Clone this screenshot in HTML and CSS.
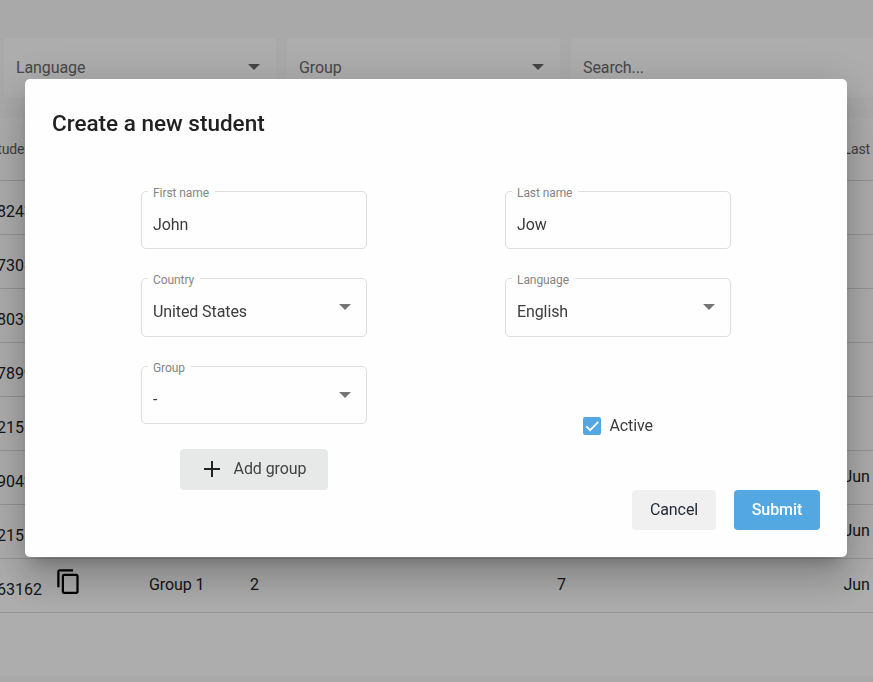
FILE: index.html
```html
<!DOCTYPE html>
<html lang="en">
<head>
<meta charset="utf-8">
<title>Students</title>
<link rel="stylesheet" href="styles.css">
</head>
<body>
<main class="page">
  <div class="filters">
    <div class="filter"><span>Language</span><i class="caret"></i></div>
    <div class="filter"><span>Group</span><i class="caret"></i></div>
    <div class="filter"><span>Search...</span></div>
  </div>
  <section class="table">
    <div class="row head"><span class="id">Student</span><span></span><span></span><span></span><span></span><span>Last</span></div>
    <div class="row"><span class="id">8243</span></div>
    <div class="row"><span class="id">7308</span></div>
    <div class="row"><span class="id">8039</span></div>
    <div class="row"><span class="id">7899</span></div>
    <div class="row"><span class="id">215</span></div>
    <div class="row"><span class="id">9042</span><span></span><span></span><span></span><span></span><span>Jun</span></div>
    <div class="row"><span class="id">215</span><span></span><span></span><span></span><span></span><span>Jun</span></div>
    <div class="row">
      <span class="id">63162</span>
      <span class="copy"><svg width="27" height="27" viewBox="0 0 24 24"><path d="M16 1H4c-1.100 0-2 .9-2 2v14h2V3h12V1zm3 4H8c-1.100 0-2 .9-2 2v14c0 1.100.9 2 2 2h11c1.100 0 2-.9 2-2V7c0-1.100-.9-2-2-2zm0 16H8V7h11v14z"/></svg></span>
      <span>Group 1</span><span>2</span><span>7</span><span>Jun</span>
    </div>
  </section>
</main>
<div class="backdrop">
  <form class="dialog">
    <h2>Create a new student</h2>
    <div class="fields">
      <div class="column">
        <div class="field"><label>First name</label><span>John</span></div>
        <div class="field tall"><label>Country</label><span>United States</span><i class="caret"></i></div>
        <div class="field"><label>Group</label><span>-</span><i class="caret"></i></div>
        <button type="button" class="add"><svg width="16" height="16" viewBox="0 0 16 16"><path d="M8 0v16M0 8h16"/></svg>Add group</button>
      </div>
      <div class="column">
        <div class="field"><label>Last name</label><span>Jow</span></div>
        <div class="field tall"><label>Language</label><span>English</span><i class="caret"></i></div>
        <div class="check"><span class="box"><svg width="18" height="18" viewBox="0 0 18 18"><path d="M3.300 9.300l3.800 3.900L15.300 4.900"/></svg></span>Active</div>
      </div>
    </div>
    <div class="actions">
      <button type="button" class="cancel">Cancel</button>
      <button type="button" class="submit">Submit</button>
    </div>
  </form>
</div>
</body>
</html>
```
FILE: styles.css
```css
* { box-sizing: border-box; }
body {
  margin: 0;
  height: 682px;
  overflow: hidden;
  background: #fafafa;
  font: 16px/20px Roboto, sans-serif;
  letter-spacing: -.1px;
  color: #212121;
}
.page { padding-top: 38px; }
.filters {
  display: grid;
  grid-template-columns: 272px 273px 320px;
  gap: 11px;
  padding-left: 4px;
}
.filter {
  height: 59px;
  padding: 0 16px 0 12px;
  display: flex;
  align-items: center;
  justify-content: space-between;
  background: #fff;
  border-radius: 4px;
  color: #6b6b6b;
}
.caret {
  width: 0;
  border: 6px solid transparent;
  border-top-color: #757575;
  border-bottom: 0;
}
.filter .caret { margin-top: -1px; border-top-color: #666; }
.table {
  margin-top: 21px;
  height: 558px;
  background: #fff;
}
.row {
  display: grid;
  grid-template-columns: 54px 95px 101px 307px 286.5px 60px;
  height: 54px;
  align-items: center;
  padding-bottom: 1px;
  border-bottom: 1px solid #dcdcdc;
}
.head {
  height: 63px;
  padding-bottom: 0;
  font-size: 14px;
  font-weight: 400;
  color: #606060;
}
.id { margin-left: -3px; padding-top: 9px; letter-spacing: 0; }
.head .id { margin-left: -11px; padding-top: 0; letter-spacing: -.1px; }
.copy { height: 28px; margin: -7px 0 0 1px; }
.backdrop {
  position: fixed;
  inset: 0;
  padding: 79px 26px 0 25px;
  background: rgba(0, 0, 0, .32);
}
.dialog {
  height: 478px;
  padding: 28px 27px 27px;
  display: flex;
  flex-direction: column;
  background: #fefefe;
  border-radius: 5px;
  box-shadow: 0 11px 15px -7px rgba(0, 0, 0, .2), 0 24px 38px 3px rgba(0, 0, 0, .14), 0 9px 46px 8px rgba(0, 0, 0, .12);
}
h2 { margin: 0; font-size: 22.5px; line-height: 32px; font-weight: 500; letter-spacing: 0; }
.fields {
  display: flex;
  gap: 138px;
  margin: 52px 0 0 89px;
}
.column {
  width: 226px;
  display: flex;
  flex-direction: column;
  gap: 29px;
}
.field {
  position: relative;
  height: 58px;
  display: flex;
  align-items: center;
  justify-content: space-between;
  padding: 10px 15px 0 11px;
  border: 1px solid #dedede;
  border-radius: 5px;
  color: #3c3c3c;
}
.tall { height: 59px; padding-top: 8px; }
.field label {
  position: absolute;
  left: 6px;
  top: -9px;
  padding: 0 6px 0 5px;
  font-size: 12px;
  line-height: 20px;
  letter-spacing: -.08px;
  background: #fefefe;
  color: #858585;
}
.field .caret { margin-top: -10px; }
.tall .caret { margin-top: -9px; }
button {
  height: 40px;
  padding: 0;
  border: 0;
  border-radius: 4px;
  font: 16px/20px Roboto, sans-serif;
  letter-spacing: -.08px;
}
.add {
  width: 148px;
  height: 41px;
  margin: -4px 0 0 39px;
  padding: 0 0 2px 2px;
  display: flex;
  align-items: center;
  justify-content: center;
  gap: 14px;
  background: #e7e9e8;
  color: #424242;
}
.add svg { fill: none; stroke: #222; stroke-width: 2; }
.check {
  display: flex;
  align-items: center;
  gap: 8.5px;
  margin: 50px 0 0 78px;
  color: #3c3c3c;
}
.box { width: 18px; height: 18px; border-radius: 2px; background: #53a8e2; }
.box svg { display: block; fill: none; stroke: #fff; stroke-width: 1.8; }
.actions { display: flex; justify-content: flex-end; gap: 18px; }
.cancel, .submit { padding-bottom: 1px; }
.cancel { width: 84px; background: #f0f0f0; color: #212b36; }
.submit { width: 86px; background: #53a8e2; color: #fff; font-weight: 500; }
```
